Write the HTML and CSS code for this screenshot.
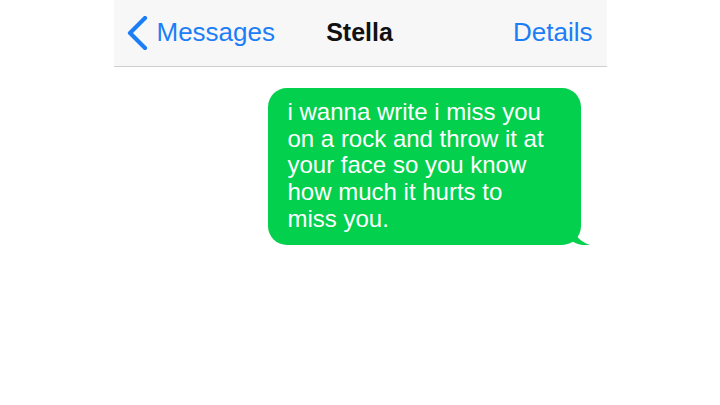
FILE: index.html
```html
<!DOCTYPE html>
<html>
	<head>
		<meta charset="UTF-8">
		<title>Stella</title>
		<link rel="stylesheet" href="styles.css">
	</head>
	<body>
		<div class="phone">
			<div class="navbar">
				<a href="#" class="back">
					<svg width="22" height="34" viewBox="0 0 22 34">
						<polyline points="18,2 3,17 18,32" fill="none" stroke="#1c7ef6" stroke-width="4.2" stroke-linecap="round" stroke-linejoin="round"/>
					</svg>
					<span>Messages</span>
				</a>
				<div class="title">Stella</div>
				<a href="#" class="details">Details</a>
			</div>
			<div class="thread">
				<div class="bubble">
					i wanna write i miss you<br>on a rock and throw it at<br>your face so you know<br>how much it hurts to<br>miss you.
					<svg class="tail" width="24" height="18" viewBox="0 0 24 18">
						<path d="M0,0 L6,0 C8,7 14,13 23,16 C15,17 8,15 2,10 Z" fill="#03d04d"/>
					</svg>
				</div>
			</div>
		</div>
	</body>
</html>
```

FILE: styles.css
```css
*{padding:0;margin:0;box-sizing:border-box;}
body{background:#fff;font-family:"Liberation Sans",Arial,sans-serif;}
.phone{width:493px;margin:0 auto;}

.navbar{height:67px;background:#f7f7f7;border-bottom:1px solid #cfcfcf;
	display:grid;grid-template-columns:1fr auto 1fr;align-items:center;
	padding:0 14px 2px 13px;
}
.navbar a{color:#1c7ef6;text-decoration:none;font-size:26px;}
.back{display:flex;align-items:center;gap:8px;justify-self:start;}
.back svg{display:block;margin-top:2px;}
.title{font-size:25px;font-weight:bold;color:#111;}
.details{justify-self:end;}

.thread{display:flex;justify-content:flex-end;padding:21px 26px 0 0;}
.bubble{position:relative;width:313px;background:#03d04d;color:#fff;
	border-radius:19px;
	padding:11px 10px 12px 20px;
	font-size:24px;line-height:26.7px;
}
.tail{position:absolute;right:-10px;bottom:-2px;}
```
